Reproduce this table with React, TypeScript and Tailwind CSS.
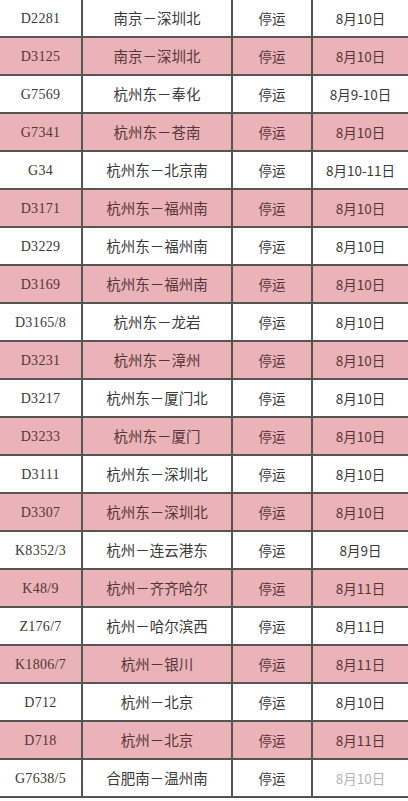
import React from "react";

type Row = [string, string, string];

const rows: Row[] = [
  ["D2281", "南京－深圳北", "8月10日"],
  ["D3125", "南京－深圳北", "8月10日"],
  ["G7569", "杭州东－奉化", "8月9-10日"],
  ["G7341", "杭州东－苍南", "8月10日"],
  ["G34", "杭州东－北京南", "8月10-11日"],
  ["D3171", "杭州东－福州南", "8月10日"],
  ["D3229", "杭州东－福州南", "8月10日"],
  ["D3169", "杭州东－福州南", "8月10日"],
  ["D3165/8", "杭州东－龙岩", "8月10日"],
  ["D3231", "杭州东－漳州", "8月10日"],
  ["D3217", "杭州东－厦门北", "8月10日"],
  ["D3233", "杭州东－厦门", "8月10日"],
  ["D3111", "杭州东－深圳北", "8月10日"],
  ["D3307", "杭州东－深圳北", "8月10日"],
  ["K8352/3", "杭州－连云港东", "8月9日"],
  ["K48/9", "杭州－齐齐哈尔", "8月11日"],
  ["Z176/7", "杭州－哈尔滨西", "8月11日"],
  ["K1806/7", "杭州－银川", "8月11日"],
  ["D712", "杭州－北京", "8月10日"],
  ["D718", "杭州－北京", "8月11日"],
  ["G7638/5", "合肥南－温州南", "8月10日"],
];

export default function App() {
  return (
    <div className="w-[408px] h-[801px] bg-white overflow-hidden">
      {rows.map(([no, route, date], i) => {
        const pink = i % 2 === 1;
        const last = i === rows.length - 1;
        return (
          <div
            key={no}
            className={
              pink
                ? "grid grid-cols-[83px_150px_80px_1fr] h-[38px] border-b-2 border-[#555555] bg-[#e9b3b7] text-[#58343a]"
                : "grid grid-cols-[83px_150px_80px_1fr] h-[38px] border-b-2 border-[#555555] bg-white text-[#3a3a3a]"
            }
          >
            <div className="flex items-center justify-center border-r-2 border-[#555555] text-[14px] tracking-[0.3px] [font-family:'Liberation_Serif',serif]">
              {no}
            </div>
            <div className="flex items-center justify-center border-r-2 border-[#555555] text-[14.5px] [font-family:'Noto_Sans_CJK_SC',sans-serif]">
              {route}
            </div>
            <div className="flex items-center justify-center border-r-2 border-[#555555] text-[13.5px] [font-family:'Noto_Sans_CJK_SC',sans-serif]">
              停运
            </div>
            <div
              className={
                last
                  ? "flex items-center justify-center text-[13.5px] [font-family:'Noto_Sans_CJK_SC',sans-serif] text-[#b5b5b5]"
                  : "flex items-center justify-center text-[13.5px] [font-family:'Noto_Sans_CJK_SC',sans-serif]"
              }
            >
              {date}
            </div>
          </div>
        );
      })}
    </div>
  );
}
